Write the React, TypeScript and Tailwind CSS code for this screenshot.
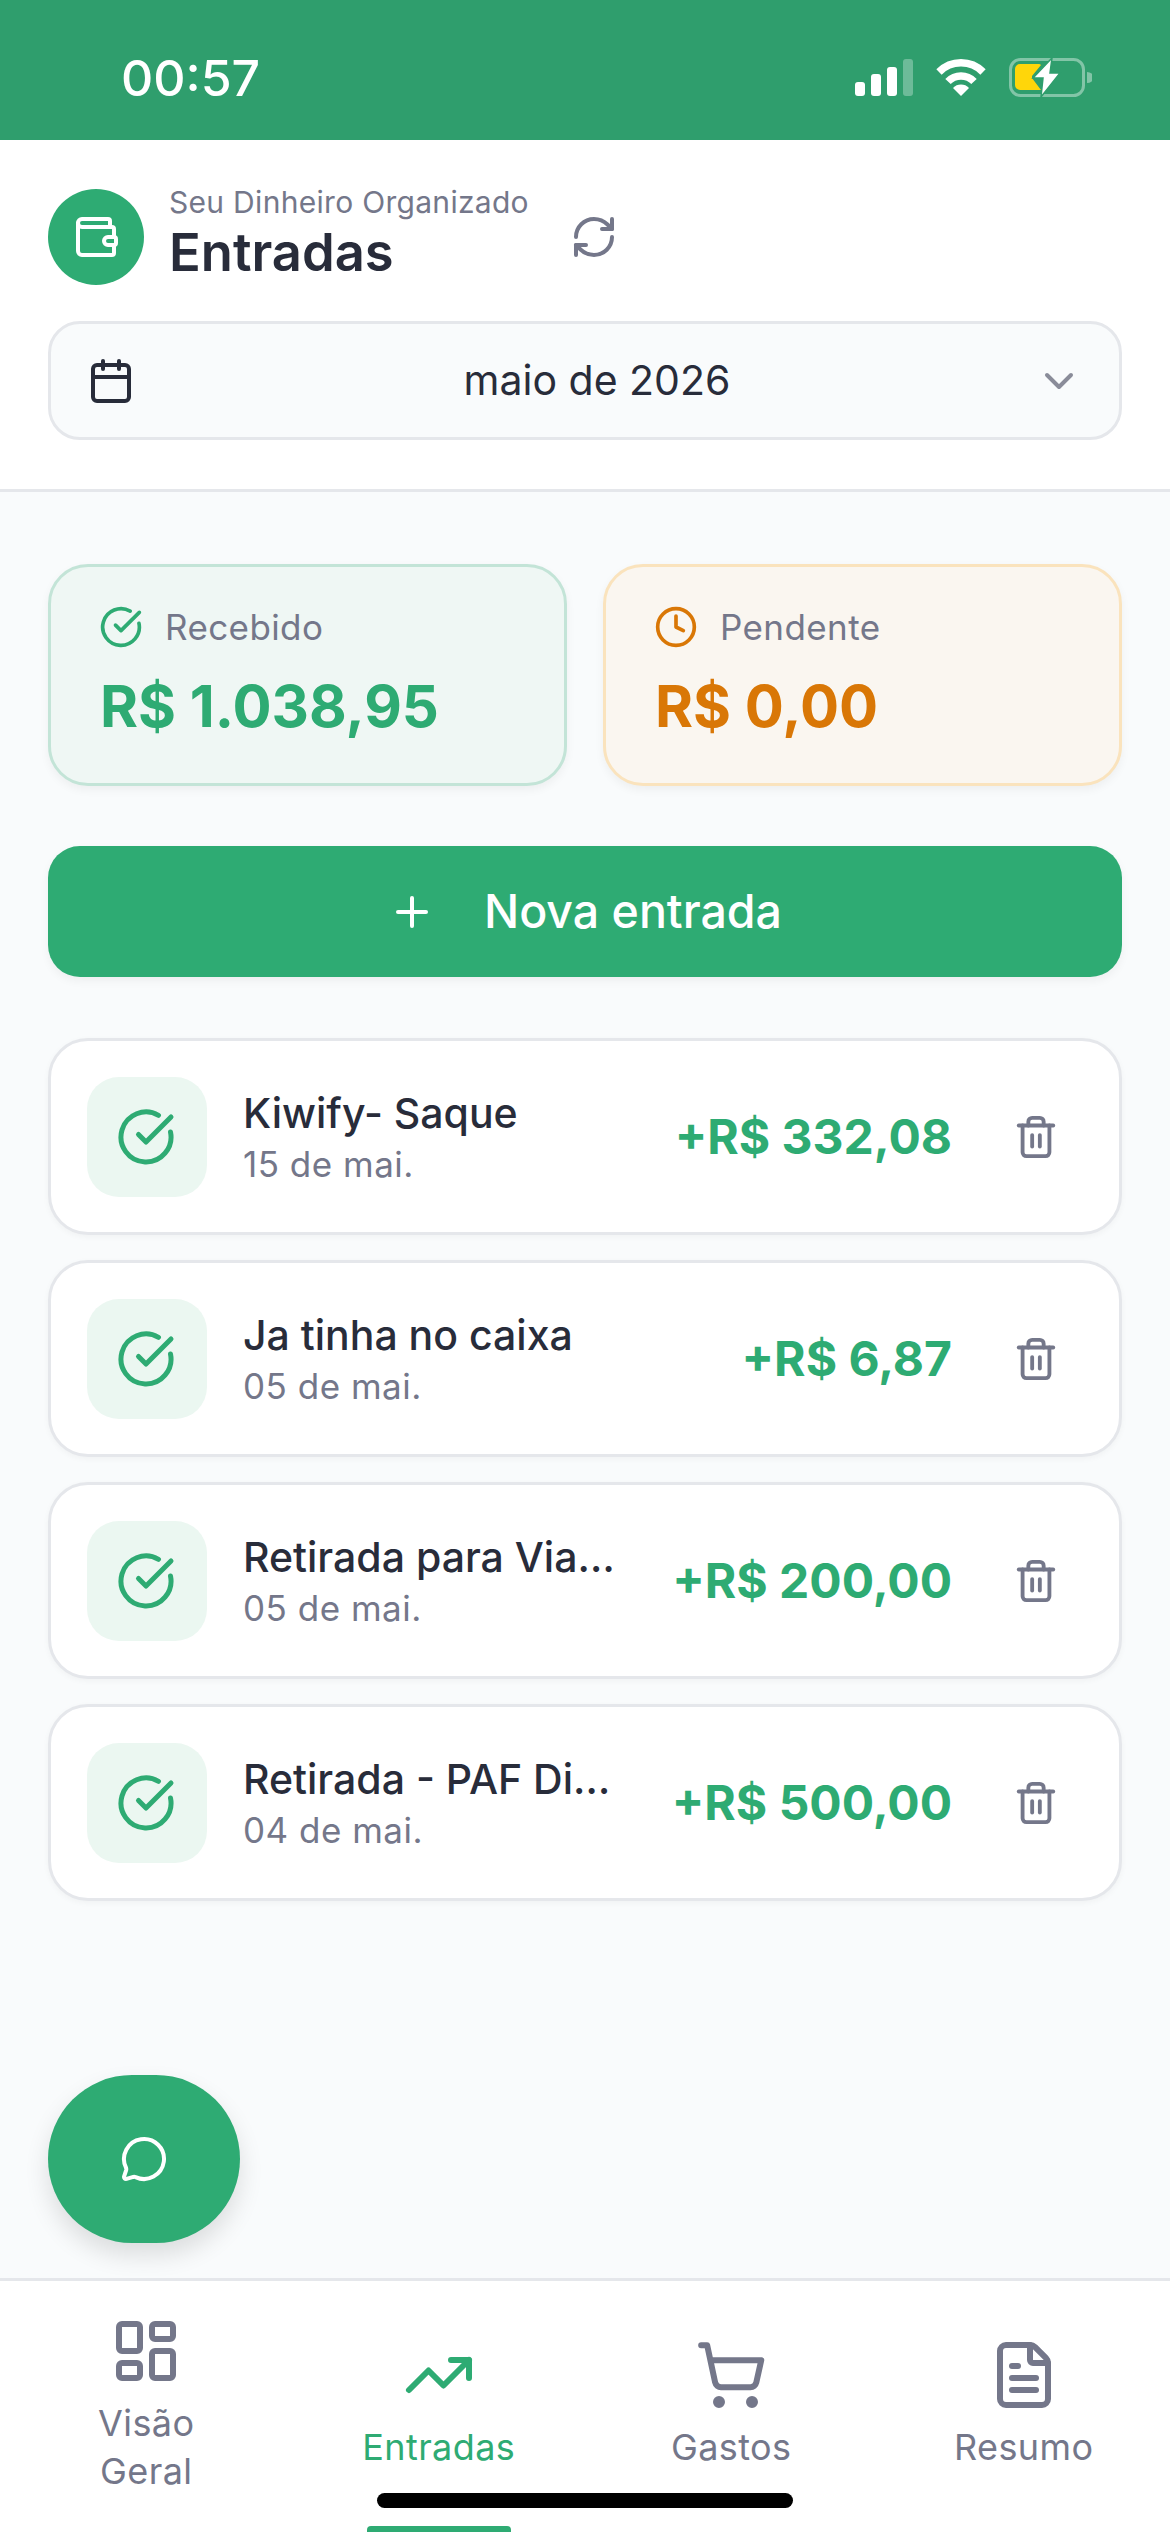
import React from "react";
import { Wallet, RefreshCw, Calendar, ChevronDown, CircleCheckBig, Clock, Plus, Trash2, MessageCircle, LayoutDashboard, TrendingUp, ShoppingCart, FileText } from "lucide-react";

const items = [
  { t: "Kiwify- Saque", d: "15 de mai.", v: "+R$ 332,08" },
  { t: "Ja tinha no caixa", d: "05 de mai.", v: "+R$ 6,87" },
  { t: "Retirada para Via…", d: "05 de mai.", v: "+R$ 200,00" },
  { t: "Retirada - PAF Di…", d: "04 de mai.", v: "+R$ 500,00" },
];

function StatusBar() {
  return (
    <div className="h-[140px] shrink-0 bg-[#2f9e6d] flex items-center justify-between pl-[121px] pr-[78px] pt-[15px]">
      <span className="text-[50px] font-medium text-white leading-none">00:57</span>
      <div className="flex items-center gap-[23px]">
        <svg width="58" height="38" viewBox="0 0 58 38">
          <rect x="0" y="23" width="10" height="14" rx="3" fill="#fff" />
          <rect x="16" y="15" width="10" height="22" rx="3" fill="#fff" />
          <rect x="32" y="8" width="10" height="29" rx="3" fill="#fff" />
          <rect x="48" y="0" width="10" height="37" rx="3" fill="#fff" fillOpacity="0.3" />
        </svg>
        <svg width="50" height="38" viewBox="0 0 50 38">
          <path d="M3 13 A31 31 0 0 1 47 13" fill="none" stroke="#fff" strokeWidth="7.5" />
          <path d="M12 22.5 A18 18 0 0 1 38 22.5" fill="none" stroke="#fff" strokeWidth="7.5" />
          <path d="M17 29 A11 11 0 0 1 33 29 L25 37 Z" fill="#fff" />
        </svg>
        <svg width="83" height="40" viewBox="0 0 83 40">
          <rect x="1.5" y="1.5" width="73" height="36" rx="10" fill="none" stroke="#fff" strokeOpacity="0.4" strokeWidth="3" />
          <path d="M6 11 a5 5 0 0 1 5 -5 h19 a4 4 0 0 1 2 1 l-9 11 v2 l9 12 h-21 a5 5 0 0 1 -5 -5 Z" fill="#ffd60a" />
          <path d="M43 0 L24 20 L34 20 L32 39 L51 15 L41 15 Z" fill="#fff" stroke="#2f9e6d" strokeWidth="1.5" />
          <path d="M78 14 a6 5 0 0 1 0 11 Z" fill="#fff" fillOpacity="0.4" />
        </svg>
      </div>
    </div>
  );
}

function Header() {
  return (
    <div className="shrink-0 bg-white border-b-[3px] border-[#e5e7eb] px-[48px] pt-[49px] pb-[49px]">
      <div className="flex items-center h-[96px]">
        <div className="w-[96px] h-[96px] rounded-full bg-[#2eab73] flex items-center justify-center">
          <Wallet size={48} className="text-white" strokeWidth={2} />
        </div>
        <div className="ml-[25px] w-[401px] -mt-[8px]">
          <div className="text-[30px] leading-[36px] tracking-[0.3px] text-[#74778a]">Seu Dinheiro Organizado</div>
          <div className="mt-[2px] text-[52.5px] leading-[60px] font-semibold text-[#282c3a]">Entradas</div>
        </div>
        <RefreshCw size={48} className="text-[#74778a] mt-[0px]" strokeWidth={2} />
      </div>
      <div className="mt-[36px] h-[119px] rounded-[32px] border-[3px] border-[#e5e7eb] bg-[#f9fbfc] flex items-center justify-between px-[36px]">
        <Calendar size={48} className="text-[#282c3a]" strokeWidth={2} />
        <span className="ml-[24px] text-[41px] text-[#282c3a]">maio de 2026</span>
        <ChevronDown size={48} className="text-[#8a8c99]" strokeWidth={2} />
      </div>
    </div>
  );
}

function Summary({ tone, icon, label, value }: { tone: "green" | "orange"; icon: React.ReactNode; label: string; value: string }) {
  const box = tone === "green" ? "bg-[#eff7f4] border-[#c3e4d7]" : "bg-[#faf6f0] border-[#fae3bd]";
  const color = tone === "green" ? "text-[#2eab73]" : "text-[#d97706]";
  return (
    <div className={`flex-1 h-[222px] rounded-[40px] border-[3px] ${box} shadow-[0_4px_10px_rgba(0,0,0,0.05)] pl-[49px] pt-[38px]`}>
      <div className="flex items-center gap-[22px] h-[44px]">
        <span className={`-ml-[1px] ${color}`}>{icon}</span>
        <span className="text-[35px] tracking-[0.4px] text-[#74778a]">{label}</span>
      </div>
      <div className={`mt-[21px] text-[58px] leading-[72px] font-bold ${color}`}>{value}</div>
    </div>
  );
}

function Item({ t, d, v }: { t: string; d: string; v: string }) {
  return (
    <div className="h-[197px] rounded-[40px] border-[3px] border-[#e5e7eb] bg-white shadow-[0_2px_6px_rgba(0,0,0,0.04)] flex items-center pl-[36px] pr-[60px]">
      <div className="w-[120px] h-[120px] shrink-0 rounded-[32px] bg-[#ebf7f1] flex items-center justify-center">
        <CircleCheckBig size={60} className="text-[#2eab73] -ml-[3px]" strokeWidth={2} />
      </div>
      <div className="ml-[36px] w-[375px] flex-none">
        <div className="text-[41px] leading-[52px] font-medium text-[#282c3a] whitespace-nowrap">{t}</div>
        <div className="text-[35px] leading-[44px] tracking-[0.5px] text-[#74778a] mt-[3px]">{d}</div>
      </div>
      <div className="flex-1 text-right text-[48px] font-bold text-[#2eab73] whitespace-nowrap">{v}</div>
      <Trash2 size={46} className="text-[#74778a] ml-[61px] shrink-0" strokeWidth={2} />
    </div>
  );
}

function NavItem({ icon, label, active }: { icon: React.ReactNode; label: React.ReactNode; active?: boolean }) {
  return (
    <div className={`relative flex-1 h-full flex flex-col items-center justify-center pb-[3px] ${active ? "text-[#2eab73]" : "text-[#74778a]"}`}>
      {icon}
      <div className="text-[36px] leading-[48px] tracking-[0.4px] text-center mt-[12px]">{label}</div>
      {active && <div className="absolute bottom-0 left-[74px] w-[144px] h-[6px] rounded-t-[4px] bg-[#2eab73]" />}
    </div>
  );
}

export default function App() {
  return (
    <div className="relative w-[1170px] h-[2532px] flex flex-col overflow-hidden bg-[#f9fbfc] font-['Inter',sans-serif]">
      <StatusBar />
      <Header />
      <div className="flex-1 min-h-0 px-[48px] pt-[72px]">
        <div className="flex gap-[36px]">
          <Summary tone="green" icon={<CircleCheckBig size={44} strokeWidth={2} />} label="Recebido" value="R$ 1.038,95" />
          <Summary tone="orange" icon={<Clock size={44} strokeWidth={2} />} label="Pendente" value="R$ 0,00" />
        </div>
        <div className="mt-[60px] h-[131px] rounded-[32px] bg-[#2eab73] shadow-[0_4px_10px_rgba(0,0,0,0.05)] flex items-center justify-center gap-[46px] text-white">
          <Plus size={48} strokeWidth={2} />
          <span className="ml-[2px] text-[46.5px] font-medium">Nova entrada</span>
        </div>
        <div className="mt-[61px] flex flex-col gap-[25px]">
          {items.map((i) => <Item key={i.t} {...i} />)}
        </div>
      </div>
      <div className="absolute left-[48px] top-[2075px] w-[192px] h-[168px] rounded-full bg-[#2eab73] shadow-[0_12px_24px_rgba(0,0,0,0.12)] flex items-center justify-center">
        <MessageCircle size={48} className="text-white" strokeWidth={2} />
      </div>
      <div className="shrink-0 h-[254px] bg-white border-t-[3px] border-[#e5e7eb] flex">
        <NavItem icon={<LayoutDashboard size={72} strokeWidth={2} />} label={<>Visão<br />Geral</>} />
        <NavItem active icon={<TrendingUp size={72} strokeWidth={2} />} label="Entradas" />
        <NavItem icon={<ShoppingCart size={72} strokeWidth={2} />} label="Gastos" />
        <NavItem icon={<FileText size={72} strokeWidth={2} />} label="Resumo" />
      </div>
      <div className="absolute left-[377px] top-[2493px] w-[416px] h-[15px] rounded-full bg-black" />
    </div>
  );
}
